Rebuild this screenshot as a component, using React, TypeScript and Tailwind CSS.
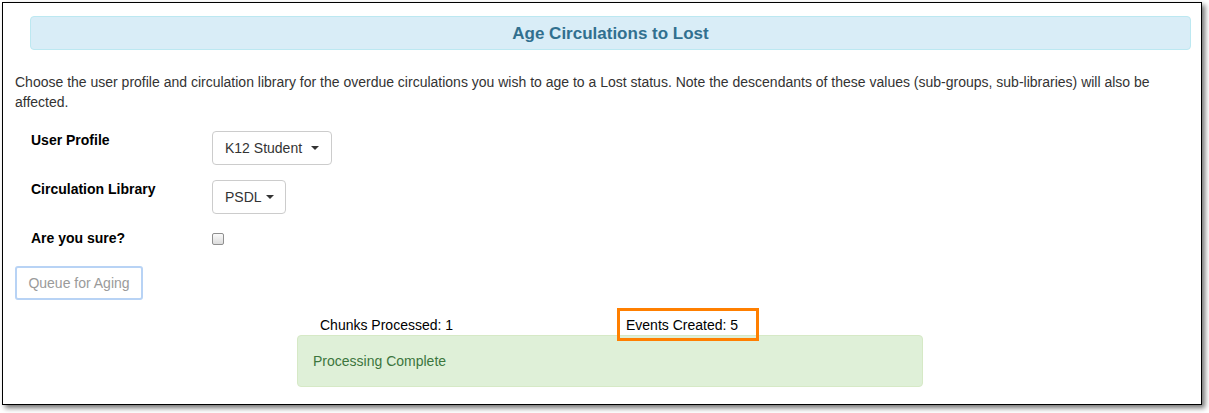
import React from "react";

function Caret({ ml }: { ml: string }) {
  return (
    <span
      className={
        "inline-block w-0 h-0 border-t-[4px] border-t-[#333] border-x-[4px] border-x-transparent align-middle " + ml
      }
    />
  );
}

export default function App() {
  return (
    <div
      className="min-h-screen w-full bg-white text-[#333]"
      style={{ fontFamily: '"Liberation Sans", Arial, sans-serif' }}
    >
      <div className="relative ml-[2px] mt-[2px] w-[1200px] h-[403px] border border-black bg-white shadow-[3px_3px_5px_rgba(0,0,0,0.55)]">
        <div className="ml-[27px] mt-[13px] w-[1161px] h-[34px] pt-[2px] rounded-[4px] bg-[#d9edf7] border border-[#bce8f1] flex items-center justify-center text-[17px] font-bold text-[#31708f]">
          Age Circulations to Lost
        </div>

        <p className="ml-[12px] mt-[22px] w-[1172px] text-[14px] leading-[20px] text-[#333]">
          Choose the user profile and circulation library for the overdue circulations you wish to age to a Lost status. Note the descendants of these values (sub-groups, sub-libraries) will also be affected.
        </p>

        <div className="mt-[18px] ml-[28px] text-[14px] leading-[20px]">
          <div className="flex items-start mb-[14px]">
            <div className="w-[181px] font-bold text-black">User Profile</div>
            <button className="mt-[1px] h-[34px] px-[12px] border border-[#ccc] rounded-[4px] bg-white text-[#333] flex items-center">
              K12 Student<Caret ml="ml-[9px]" />
            </button>
          </div>
          <div className="flex items-start mb-[14px]">
            <div className="w-[181px] font-bold text-black">Circulation Library</div>
            <button className="mt-[1px] h-[34px] pl-[12px] pr-[11px] border border-[#ccc] rounded-[4px] bg-white text-[#333] flex items-center">
              PSDL<Caret ml="ml-[4px]" />
            </button>
          </div>
          <div className="flex items-start">
            <div className="w-[181px] font-bold text-black">Are you sure?</div>
            <span className="mt-[5px] block w-[12px] h-[12px] rounded-[2px] border border-[#8f8f8f] bg-gradient-to-b from-[#fafafa] to-[#dcdcdc]" />
          </div>
        </div>

        <button className="ml-[12px] mt-[18px] w-[128px] h-[34px] rounded-[3px] border-2 border-[#b8d3f5] bg-white text-[14px] text-[#9a9a9a]">
          Queue for Aging
        </button>

        <div className="relative ml-[294px] mt-[15px] w-[626px] text-[14px] leading-[20px]">
          <div className="flex h-[20px] text-black">
            <div className="w-[306px] pl-[23px]">Chunks Processed: 1</div>
            <div className="pl-[23px]">Events Created: 5</div>
          </div>
          <div className="h-[52px] rounded-[4px] border border-[#d6e9c6] bg-[#dff0d8] px-[15px] py-[15px] text-[#3c763d]">
            Processing Complete
          </div>
          <div className="absolute left-[320px] top-[-7px] w-[142px] h-[33px] border-[3px] border-[#ff7f00]" />
        </div>
      </div>
    </div>
  );
}
